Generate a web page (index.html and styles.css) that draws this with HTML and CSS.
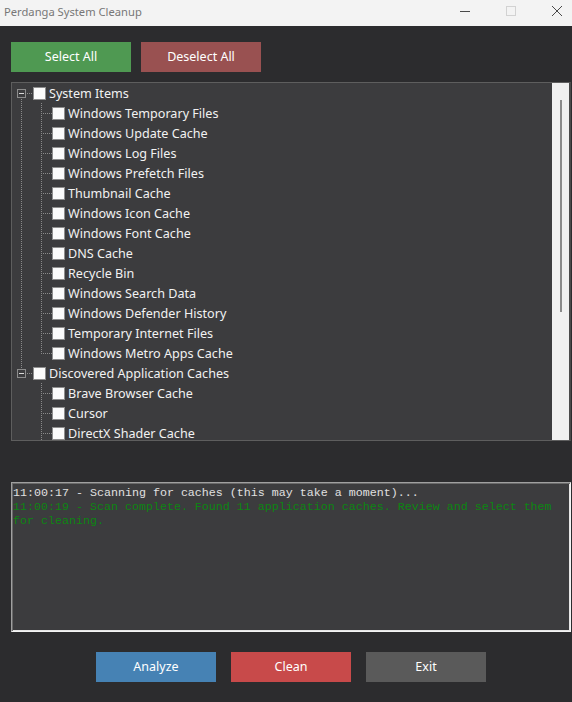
FILE: index.html
```html
<!DOCTYPE html>
<html>
<head>
<meta charset="utf-8">
<link rel="stylesheet" href="styles.css">
</head>
<body>
<div class="titlebar">
  <span class="title">Perdanga System Cleanup</span>
  <div class="controls">
    <svg class="ctl" width="10" height="10" viewBox="0 0 10 10"><path d="M0 5.5H10" stroke="#4a4a4a" stroke-width="1"/></svg>
    <svg class="ctl" width="10" height="10" viewBox="0 0 10 10"><rect x="0.5" y="0.5" width="9" height="9" fill="none" stroke="#d2d2d2" stroke-width="1"/></svg>
    <svg class="ctl" width="10" height="10" viewBox="0 0 10 10"><path d="M0 0L10 10M10 0L0 10" stroke="#4a4a4a" stroke-width="1"/></svg>
  </div>
</div>
<div class="main">
  <div class="topbar">
    <button class="btn green">Select All</button>
    <button class="btn maroon">Deselect All</button>
  </div>
  <div class="tree">
    <div class="list">
      <div class="row parent first"><span class="gutter-p"><span class="exp"></span></span><span class="cb"></span><span class="lbl">System Items</span></div>
      <div class="row child"><span class="gutter-c"></span><span class="cb"></span><span class="lbl">Windows Temporary Files</span></div>
      <div class="row child"><span class="gutter-c"></span><span class="cb"></span><span class="lbl">Windows Update Cache</span></div>
      <div class="row child"><span class="gutter-c"></span><span class="cb"></span><span class="lbl">Windows Log Files</span></div>
      <div class="row child"><span class="gutter-c"></span><span class="cb"></span><span class="lbl">Windows Prefetch Files</span></div>
      <div class="row child"><span class="gutter-c"></span><span class="cb"></span><span class="lbl">Thumbnail Cache</span></div>
      <div class="row child"><span class="gutter-c"></span><span class="cb"></span><span class="lbl">Windows Icon Cache</span></div>
      <div class="row child"><span class="gutter-c"></span><span class="cb"></span><span class="lbl">Windows Font Cache</span></div>
      <div class="row child"><span class="gutter-c"></span><span class="cb"></span><span class="lbl">DNS Cache</span></div>
      <div class="row child"><span class="gutter-c"></span><span class="cb"></span><span class="lbl">Recycle Bin</span></div>
      <div class="row child"><span class="gutter-c"></span><span class="cb"></span><span class="lbl">Windows Search Data</span></div>
      <div class="row child"><span class="gutter-c"></span><span class="cb"></span><span class="lbl">Windows Defender History</span></div>
      <div class="row child"><span class="gutter-c"></span><span class="cb"></span><span class="lbl">Temporary Internet Files</span></div>
      <div class="row child"><span class="gutter-c last"></span><span class="cb"></span><span class="lbl">Windows Metro Apps Cache</span></div>
      <div class="row parent"><span class="gutter-p end"><span class="exp"></span></span><span class="cb"></span><span class="lbl">Discovered Application Caches</span></div>
      <div class="row child"><span class="gutter-c solo"></span><span class="cb"></span><span class="lbl">Brave Browser Cache</span></div>
      <div class="row child"><span class="gutter-c solo"></span><span class="cb"></span><span class="lbl">Cursor</span></div>
      <div class="row child"><span class="gutter-c solo"></span><span class="cb"></span><span class="lbl">DirectX Shader Cache</span></div>
    </div>
    <div class="scrollbar"><div class="thumb"></div></div>
  </div>
  <div class="log">
    <div class="line info">11:00:17 - Scanning for caches (this may take a moment)...</div>
    <div class="line ok">11:00:19 - Scan complete. Found 11 application caches. Review and select them for cleaning.</div>
  </div>
  <div class="bottombar">
    <button class="btn blue">Analyze</button>
    <button class="btn red">Clean</button>
    <button class="btn grey">Exit</button>
  </div>
</div>
</body>
</html>
```

FILE: styles.css
```css
* { box-sizing: border-box; }
html, body { margin: 0; padding: 0; }
body {
  width: 572px;
  height: 702px;
  background: #2c2c2e;
  font-family: "Noto Sans", "Open Sans", sans-serif;
  overflow: hidden;
}
.titlebar {
  height: 26px;
  background: #f3f3f3;
  display: flex;
  align-items: center;
  justify-content: space-between;
}
.title {
  padding-left: 4px;
  font-size: 11.2px;
  color: #777777;
  line-height: 26px;
  margin-top: -2px;
}
.controls {
  display: flex;
  align-items: center;
  gap: 36px;
  padding-right: 10px;
  margin-top: -4px;
}
.ctl { display: block; }
.main {
  padding: 16px 1px 0 11px;
}
.topbar {
  display: flex;
  gap: 10px;
}
.btn {
  width: 120px;
  height: 30px;
  border: none;
  margin: 0;
  padding: 0 0 2px 0;
  color: #ffffff;
  font-family: "Noto Sans", "Open Sans", sans-serif;
  font-size: 12.5px;
}
.green { background: #4f9952; }
.maroon { background: #995151; }
.blue { background: #4682b4; }
.red { background: #c84a4a; }
.grey { background: #5a5a5a; }

.tree {
  margin-top: 10px;
  width: 560px;
  height: 359px;
  border: 1px solid #5e5e5e;
  border-right: 2px solid #4a4a4a;
  background: #3c3c3e;
  display: flex;
}
.list {
  flex: 1;
  overflow: hidden;
}
.scrollbar {
  width: 17px;
  background: #f0f0f0;
  display: flex;
  justify-content: flex-start;
}
.thumb {
  margin-top: 17px;
  margin-left: 8px;
  width: 2px;
  height: 212px;
  background: #8a8a8a;
}
.row {
  height: 20px;
  display: flex;
  align-items: center;
  color: #f2f2f2;
  font-size: 12.6px;
  white-space: nowrap;
}
.cb {
  width: 13px;
  height: 13px;
  background: #fbfbfb;
  border: 1px solid #8e8e8e;
  flex: none;
}
.lbl { margin-left: 3px; }

.gutter-p {
  width: 21px;
  height: 20px;
  flex: none;
  display: flex;
  align-items: flex-start;
  padding: 6px 0 0 5px;
  background:
    repeating-linear-gradient(to right, #8a8a8a 0 1px, transparent 1px 2px) 15px 10px / 6px 1px no-repeat,
    repeating-linear-gradient(to bottom, #8a8a8a 0 1px, transparent 1px 2px) 9px 16px / 1px 4px no-repeat;
}
.gutter-p.end {
  background:
    repeating-linear-gradient(to right, #8a8a8a 0 1px, transparent 1px 2px) 15px 10px / 6px 1px no-repeat,
    repeating-linear-gradient(to bottom, #8a8a8a 0 1px, transparent 1px 2px) 9px 0 / 1px 6px no-repeat;
}
.exp {
  width: 9px;
  height: 9px;
  border: 1px solid #8c8c8c;
  background:
    linear-gradient(#d8d8d8, #d8d8d8) 1px 3px / 5px 1px no-repeat,
    #3c3c3e;
}
.gutter-c {
  width: 40px;
  height: 20px;
  flex: none;
  background:
    repeating-linear-gradient(to bottom, #8a8a8a 0 1px, transparent 1px 2px) 9px 0 / 1px 20px no-repeat,
    repeating-linear-gradient(to bottom, #8a8a8a 0 1px, transparent 1px 2px) 29px 0 / 1px 20px no-repeat,
    repeating-linear-gradient(to right, #8a8a8a 0 1px, transparent 1px 2px) 31px 10px / 9px 1px no-repeat;
}
.gutter-c.last {
  background:
    repeating-linear-gradient(to bottom, #8a8a8a 0 1px, transparent 1px 2px) 9px 0 / 1px 20px no-repeat,
    repeating-linear-gradient(to bottom, #8a8a8a 0 1px, transparent 1px 2px) 29px 0 / 1px 11px no-repeat,
    repeating-linear-gradient(to right, #8a8a8a 0 1px, transparent 1px 2px) 31px 10px / 9px 1px no-repeat;
}
.gutter-c.solo {
  background:
    repeating-linear-gradient(to bottom, #8a8a8a 0 1px, transparent 1px 2px) 29px 0 / 1px 20px no-repeat,
    repeating-linear-gradient(to right, #8a8a8a 0 1px, transparent 1px 2px) 31px 10px / 9px 1px no-repeat;
}

.log {
  margin-top: 41px;
  width: 560px;
  height: 150px;
  background: #3c3c3e;
  border-top: 1px solid #a0a0a0;
  border-left: 1px solid #a0a0a0;
  border-right: 1px solid #f4f4f4;
  border-bottom: 1px solid #f4f4f4;
  box-shadow: inset 1px 1px 0 #6a6a6a, inset -1px -1px 0 #e6e6e6;
  padding: 3px 2px 0 1px;
  font-family: "Liberation Mono", monospace;
  font-size: 11.67px;
  line-height: 14px;
}
.info { color: #e0e0e0; }
.ok { color: #0c8612; }

.bottombar {
  margin-top: 20px;
  width: 560px;
  display: flex;
  justify-content: center;
  gap: 15px;
}
```
